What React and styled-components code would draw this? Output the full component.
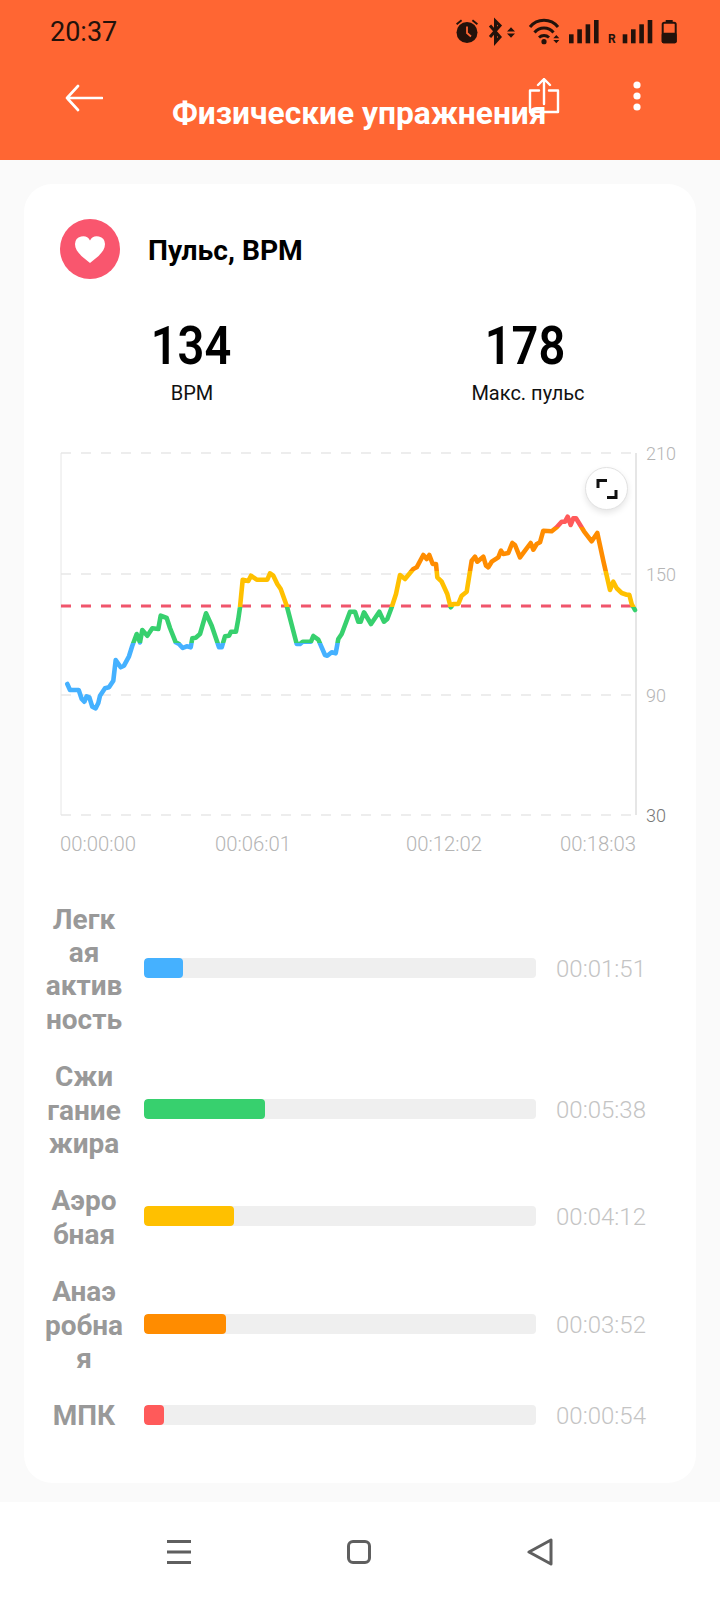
import React from "react";
import styled, { createGlobalStyle } from "styled-components";

const GlobalStyle = createGlobalStyle`
  html, body {
    margin: 0;
    padding: 0;
    background: #fafafa;
    font-family: Roboto, "Noto Sans", sans-serif;
  }
`;

// points read off the reference, in page pixels relative to the plot svg
const z2 = [
  [112,765],[120,783],[146,783],[155,810],[163,818],[170,802],[178,805],[187,833],[197,838],[205,822],[210,800],[225,778],[237,775],[250,755],[257,693],[272,715],[282,710],[297,682],[307,650],
  [320,615],[330,640],[337,603],[352,620],[367,598],[385,600],[392,560],[410,567],[420,597],[437,640],[447,645],[458,657],[470,652],[482,655],[487,628],[497,626],[510,615],[528,553],[545,590],[567,655],[575,655],[585,622],[597,620],[603,608],[618,608],[625,570],[630,535],[638,452],[655,456],[663,440],[680,452],[712,452],[720,433],[730,440],[742,465],[752,480],[770,530],[800,645],[810,645],[818,638],[843,638],[850,621],[865,632],[885,678],[892,680],[905,670],[917,673],[925,630],[935,615],[960,548],[975,548],[985,578],
];
const z3 = [
  [2,578],[12,550],[33,585],[58,548],[72,578],[82,570],[95,535],[108,495],[120,438],[135,450],[160,420],[170,415],[190,378],[200,390],[208,378],[218,405],[228,405],[232,445],[245,458],[262,495],[272,535],[280,525],[295,525],[305,500],[320,488],[335,395],[345,383],[352,398],[370,383],[378,410],[385,415],[395,398],[415,385],[423,365],[430,375],[445,372],[457,342],[465,348],[480,385],[495,365],[512,342],[520,362],[530,345],[540,340],[550,305],[575,307],[590,295],[605,278],[615,278],[623,263],[632,288],[640,268],[648,268],[672,307],[695,337],[712,312],[730,395],[750,483],[760,458],[770,478],[785,492],[800,497],[808,497],[815,525],[825,543],
];
const curve = [
  ...z2.map(([x, y]) => [30 + x / 3, 430 + y / 3]),
  ...z3.map(([x, y]) => [360 + x / 3, 430 + y / 3]),
];
const chartTop = 440;
const chartLeft = 40;
const line = curve
  .map(([x, y]) => `${(x - chartLeft).toFixed(1)},${(y - chartTop).toFixed(1)}`)
  .join(" ");

const zones = [
  { name: "Легк\nая\nактив\nность", time: "00:01:51", color: "#45b1ff", fill: 39 },
  { name: "Сжи\nгание\nжира", time: "00:05:38", color: "#37d06e", fill: 121 },
  { name: "Аэро\nбная", time: "00:04:12", color: "#ffc000", fill: 90 },
  { name: "Анаэ\nробна\nя", time: "00:03:52", color: "#ff8c00", fill: 82 },
  { name: "МПК", time: "00:00:54", color: "#ff5a5a", fill: 20 },
];

const Page = styled.div`
  width: 720px;
  height: 1600px;
  display: flex;
  flex-direction: column;
  overflow: hidden;
  background: #fafafa;
`;

const TopBar = styled.header`
  position: relative;
  height: 160px;
  flex-shrink: 0;
  background: #ff6633;
`;

const StatusRow = styled.div`
  height: 64px;
  padding: 0 43px 0 50px;
  display: flex;
  align-items: center;
  justify-content: space-between;
  color: #23120b;
`;

const Clock = styled.span`
  font-size: 27px;
`;

const ActionRow = styled.div`
  height: 64px;
  padding: 0 79px 0 65px;
  display: flex;
  align-items: center;
  justify-content: space-between;
`;

const Actions = styled.div`
  display: flex;
  align-items: center;
  gap: 73px;
`;

const Title = styled.h1`
  position: absolute;
  left: 172px;
  top: 97px;
  margin: 0;
  font-size: 31.7px;
  line-height: 34px;
  font-weight: 700;
  color: #fff;
  white-space: nowrap;
`;

const BackSvg = styled.svg`
  margin-top: 3px;
`;

const Content = styled.main`
  flex: 1;
  padding: 24px 24px 19px;
`;

const Card = styled.section`
  height: 1299px;
  box-sizing: border-box;
  background: #fff;
  border-radius: 28px;
  padding-top: 35px;
`;

const CardHead = styled.div`
  display: flex;
  align-items: center;
  gap: 28px;
  padding-left: 36px;
`;

const HeartBadge = styled.div`
  width: 60px;
  height: 60px;
  border-radius: 50%;
  background: #f9566e;
  display: flex;
  align-items: center;
  justify-content: center;
`;

const CardTitle = styled.h2`
  margin: 2px 0 0;
  font-size: 28.2px;
  font-weight: 700;
  color: #000;
`;

const Stats = styled.div`
  display: grid;
  grid-template-columns: 1fr 1fr;
  margin: 36px 4px 0 0;
`;

const Stat = styled.div`
  text-align: center;
`;

const StatValue = styled.div`
  font-size: 54px;
  line-height: 62px;
  font-weight: 600;
  color: #000;
  transform: scaleX(0.87);
`;

const StatLabel = styled.div`
  font-size: 20px;
  line-height: 24px;
  margin-top: 4px;
  padding-left: ${(p) => p.$shift || 0}px;
  color: #111;
`;

const ChartBox = styled.div`
  position: relative;
  width: 660px;
  height: 420px;
  margin: 34px 0 0 16px;
`;

const Plot = styled.svg`
  display: block;
`;

const AxisText = styled.text`
  font-family: Roboto, sans-serif;
  font-size: 18px;
  font-weight: 300;
  fill: ${(p) => (p.$dark ? "#777" : "#b5b5b5")};
`;

const TimeText = styled.text`
  font-family: Roboto, sans-serif;
  font-size: 20.3px;
  font-weight: 300;
  fill: #b5b5b5;
`;

const ExpandButton = styled.div`
  position: absolute;
  left: 545px;
  top: 28px;
  width: 43px;
  height: 43px;
  box-sizing: border-box;
  border-radius: 50%;
  background: #fff;
  border: 1px solid #e2e2e2;
  box-shadow: 0 3px 6px rgba(0, 0, 0, 0.1);
  display: flex;
  align-items: center;
  justify-content: center;
`;

const ZoneList = styled.div`
  display: flex;
  flex-direction: column;
  gap: 24.5px;
  margin-top: 44px;
`;

const ZoneRow = styled.div`
  display: grid;
  grid-template-columns: 120px 392px auto;
  align-items: center;
`;

const ZoneName = styled.div`
  font-size: 28px;
  line-height: 33.2px;
  font-weight: 700;
  color: #999;
  text-align: center;
  white-space: pre-line;
`;

const Track = styled.div`
  height: 20px;
  border-radius: 4px;
  background: #efefef;
  margin-bottom: 3px;
  overflow: hidden;
`;

const TrackFill = styled.div`
  height: 100%;
  border-radius: 4px;
  width: ${(p) => p.$w}px;
  background: ${(p) => p.$color};
`;

const ZoneTime = styled.div`
  font-size: 24px;
  font-weight: 300;
  color: #c4c4c4;
  padding-left: 20px;
  margin-bottom: 1px;
`;

const NavBar = styled.nav`
  height: 98px;
  flex-shrink: 0;
  background: #fff;
  display: flex;
  align-items: center;
  justify-content: center;
  gap: 156px;
  padding-top: 2px;
  box-sizing: border-box;
`;

const StatusIcons = () => (
  <svg width="224" height="30" viewBox="0 0 224 30">
    <g fill="#23120b">
      {/* alarm */}
      <circle cx="14" cy="15.5" r="10.5" />
      <path d="M3 6.5l5-4 1.2 1.5-5 4zM25 6.5l-5-4-1.2 1.5 5 4z" />
      <path d="M14 9.5v6.5l4 3.5" fill="none" stroke="#ff6633" strokeWidth="1.8" />
      {/* bluetooth */}
      <path d="M37 8.5l10 11.5-4.5 5V4L47 8.5 37 20" fill="none" stroke="#23120b" strokeWidth="3" />
      <path d="M54 14.5l4-4.2 4 4.2zM54 16.5l4 4.2 4-4.2z" />
      {/* wifi */}
      <path d="M77 10A18 18 0 0 1 105 10" fill="none" stroke="#23120b" strokeWidth="3" />
      <path d="M81.5 15.5A12.5 12.5 0 0 1 100.5 15.5" fill="none" stroke="#23120b" strokeWidth="3" />
      <path d="M86 20.5A7.5 7.5 0 0 1 96 20.5" fill="none" stroke="#23120b" strokeWidth="3" />
      <circle cx="91" cy="24.7" r="2.6" />
      <path d="M100.3 21.3l3-3.3 3 3.3zM100.3 23l3 3.3 3-3.3z" />
      {/* signal 1 */}
      <rect x="116" y="17.3" width="4.6" height="9" />
      <rect x="124.3" y="12.3" width="4.6" height="14" />
      <rect x="132.6" y="7.3" width="4.6" height="19" />
      <rect x="141" y="3" width="4.6" height="23.3" />
      <text x="155" y="26.3" fontFamily="Roboto, sans-serif" fontWeight="700" fontSize="12">R</text>
      {/* signal 2 */}
      <rect x="169.7" y="17.3" width="4.6" height="9" />
      <rect x="178" y="12.3" width="4.6" height="14" />
      <rect x="186.3" y="7.3" width="4.6" height="19" />
      <rect x="194.7" y="3" width="4.6" height="23.3" />
      {/* battery */}
      <rect x="212.7" y="3" width="7" height="2" />
      <rect x="209.7" y="5.7" width="13" height="19.6" rx="1.6" fill="none" stroke="#23120b" strokeWidth="2" />
      <rect x="208.7" y="15.7" width="15" height="10.6" rx="2" />
    </g>
  </svg>
);

const BackIcon = () => (
  <BackSvg width="38" height="28" viewBox="0 0 38 28" fill="none" stroke="#fff" strokeWidth="2.6" strokeLinecap="round" strokeLinejoin="round">
    <path d="M37 14H2M13 2L2 14l11 12" />
  </BackSvg>
);

const ShareIcon = () => (
  <svg width="32" height="36" viewBox="0 0 32 36" fill="none" stroke="#fff" strokeWidth="2.4" strokeLinecap="round" strokeLinejoin="round">
    <path d="M11 12.5H2V34h28V12.5h-9M16 26V1M10 7l6-6 6 6" />
  </svg>
);

const DotsIcon = () => (
  <svg width="8" height="30" viewBox="0 0 8 30" fill="#fff">
    <circle cx="4" cy="4" r="3.6" />
    <circle cx="4" cy="15" r="3.6" />
    <circle cx="4" cy="26" r="3.6" />
  </svg>
);

const HeartIcon = () => (
  <svg width="30" height="27" viewBox="0 0 30 27" fill="#fff">
    <path d="M15 27C6 20 0 15 0 8a8 8 0 0 1 15-3.6A8 8 0 0 1 30 8c0 7-6 12-15 19z" />
  </svg>
);

const ExpandIcon = () => (
  <svg width="22" height="22" viewBox="0 0 22 22" fill="none" stroke="#111" strokeWidth="3">
    <path d="M2 10V2.5h9M20 12v7.5h-9" />
  </svg>
);

const MenuIcon = () => (
  <svg width="24" height="24" viewBox="0 0 24 24" fill="#5f5f5f">
    <rect x="0" y="0" width="24" height="3" />
    <rect x="0" y="10.5" width="24" height="3" />
    <rect x="0" y="21" width="24" height="3" />
  </svg>
);

const HomeIcon = () => (
  <svg width="24" height="24" viewBox="0 0 24 24" fill="none" stroke="#5f5f5f" strokeWidth="3">
    <rect x="1.5" y="1.5" width="21" height="21" rx="4.5" />
  </svg>
);

const TriangleIcon = () => (
  <svg width="26" height="28" viewBox="0 0 26 28" fill="none" stroke="#5f5f5f" strokeWidth="3" strokeLinejoin="round">
    <path d="M24 2v24L2 14z" />
  </svg>
);

const Chart = () => {
  const w = 660;
  const left = 21;
  const right = 596;
  const ys = [14, 135, 256, 376];
  return (
    <ChartBox>
      <Plot width={w} height="420" viewBox={`0 0 ${w} 420`}>
        <defs>
          <linearGradient id="hr" gradientUnits="userSpaceOnUse" x1="0" x2="0" y1="0" y2="420">
            <stop offset={88 / 420} stopColor="#ff5a5a" />
            <stop offset={88 / 420} stopColor="#ff8c00" />
            <stop offset={132 / 420} stopColor="#ff8c00" />
            <stop offset={132 / 420} stopColor="#ffc000" />
            <stop offset={168 / 420} stopColor="#ffc000" />
            <stop offset={168 / 420} stopColor="#37d06e" />
            <stop offset={204 / 420} stopColor="#37d06e" />
            <stop offset={204 / 420} stopColor="#45b1ff" />
          </linearGradient>
        </defs>
        {ys.map((y) => (
          <line key={y} x1={left} x2={right - 5} y1={y} y2={y} stroke="#dcdcdc" strokeWidth="1.2" strokeDasharray="10 10" />
        ))}
        <line x1={left} x2={left} y1={14} y2={376} stroke="#e6e6e6" strokeWidth="1" />
        <line x1={right} x2={right} y1={14} y2={376} stroke="#e0e0e0" strokeWidth="1.6" />
        <line x1={left} x2={right - 5} y1={167} y2={167} stroke="#f0556c" strokeWidth="2.8" strokeDasharray="10 10" />
        <polyline points={line} fill="none" stroke="url(#hr)" strokeWidth="4.6" strokeLinejoin="round" strokeLinecap="round" />
        <AxisText x="606" y="21">210</AxisText>
        <AxisText x="606" y="142">150</AxisText>
        <AxisText x="606" y="263">90</AxisText>
        <AxisText x="606" y="383" $dark>30</AxisText>
        <TimeText x="20" y="412">00:00:00</TimeText>
        <TimeText x="175" y="412">00:06:01</TimeText>
        <TimeText x="366" y="412">00:12:02</TimeText>
        <TimeText x="520" y="412">00:18:03</TimeText>
      </Plot>
      <ExpandButton>
        <ExpandIcon />
      </ExpandButton>
    </ChartBox>
  );
};

const App = () => (
  <Page>
    <GlobalStyle />
    <TopBar>
      <StatusRow>
        <Clock>20:37</Clock>
        <StatusIcons />
      </StatusRow>
      <ActionRow>
        <BackIcon />
        <Actions>
          <ShareIcon />
          <DotsIcon />
        </Actions>
      </ActionRow>
      <Title>Физические упражнения</Title>
    </TopBar>
    <Content>
      <Card>
        <CardHead>
          <HeartBadge>
            <HeartIcon />
          </HeartBadge>
          <CardTitle>Пульс, BPM</CardTitle>
        </CardHead>
        <Stats>
          <Stat>
            <StatValue>134</StatValue>
            <StatLabel $shift={2}>BPM</StatLabel>
          </Stat>
          <Stat>
            <StatValue>178</StatValue>
            <StatLabel $shift={6}>Макс. пульс</StatLabel>
          </Stat>
        </Stats>
        <Chart />
        <ZoneList>
          {zones.map((z) => (
            <ZoneRow key={z.time}>
              <ZoneName>{z.name}</ZoneName>
              <Track>
                <TrackFill $w={z.fill} $color={z.color} />
              </Track>
              <ZoneTime>{z.time}</ZoneTime>
            </ZoneRow>
          ))}
        </ZoneList>
      </Card>
    </Content>
    <NavBar>
      <MenuIcon />
      <HomeIcon />
      <TriangleIcon />
    </NavBar>
  </Page>
);

export default App;
